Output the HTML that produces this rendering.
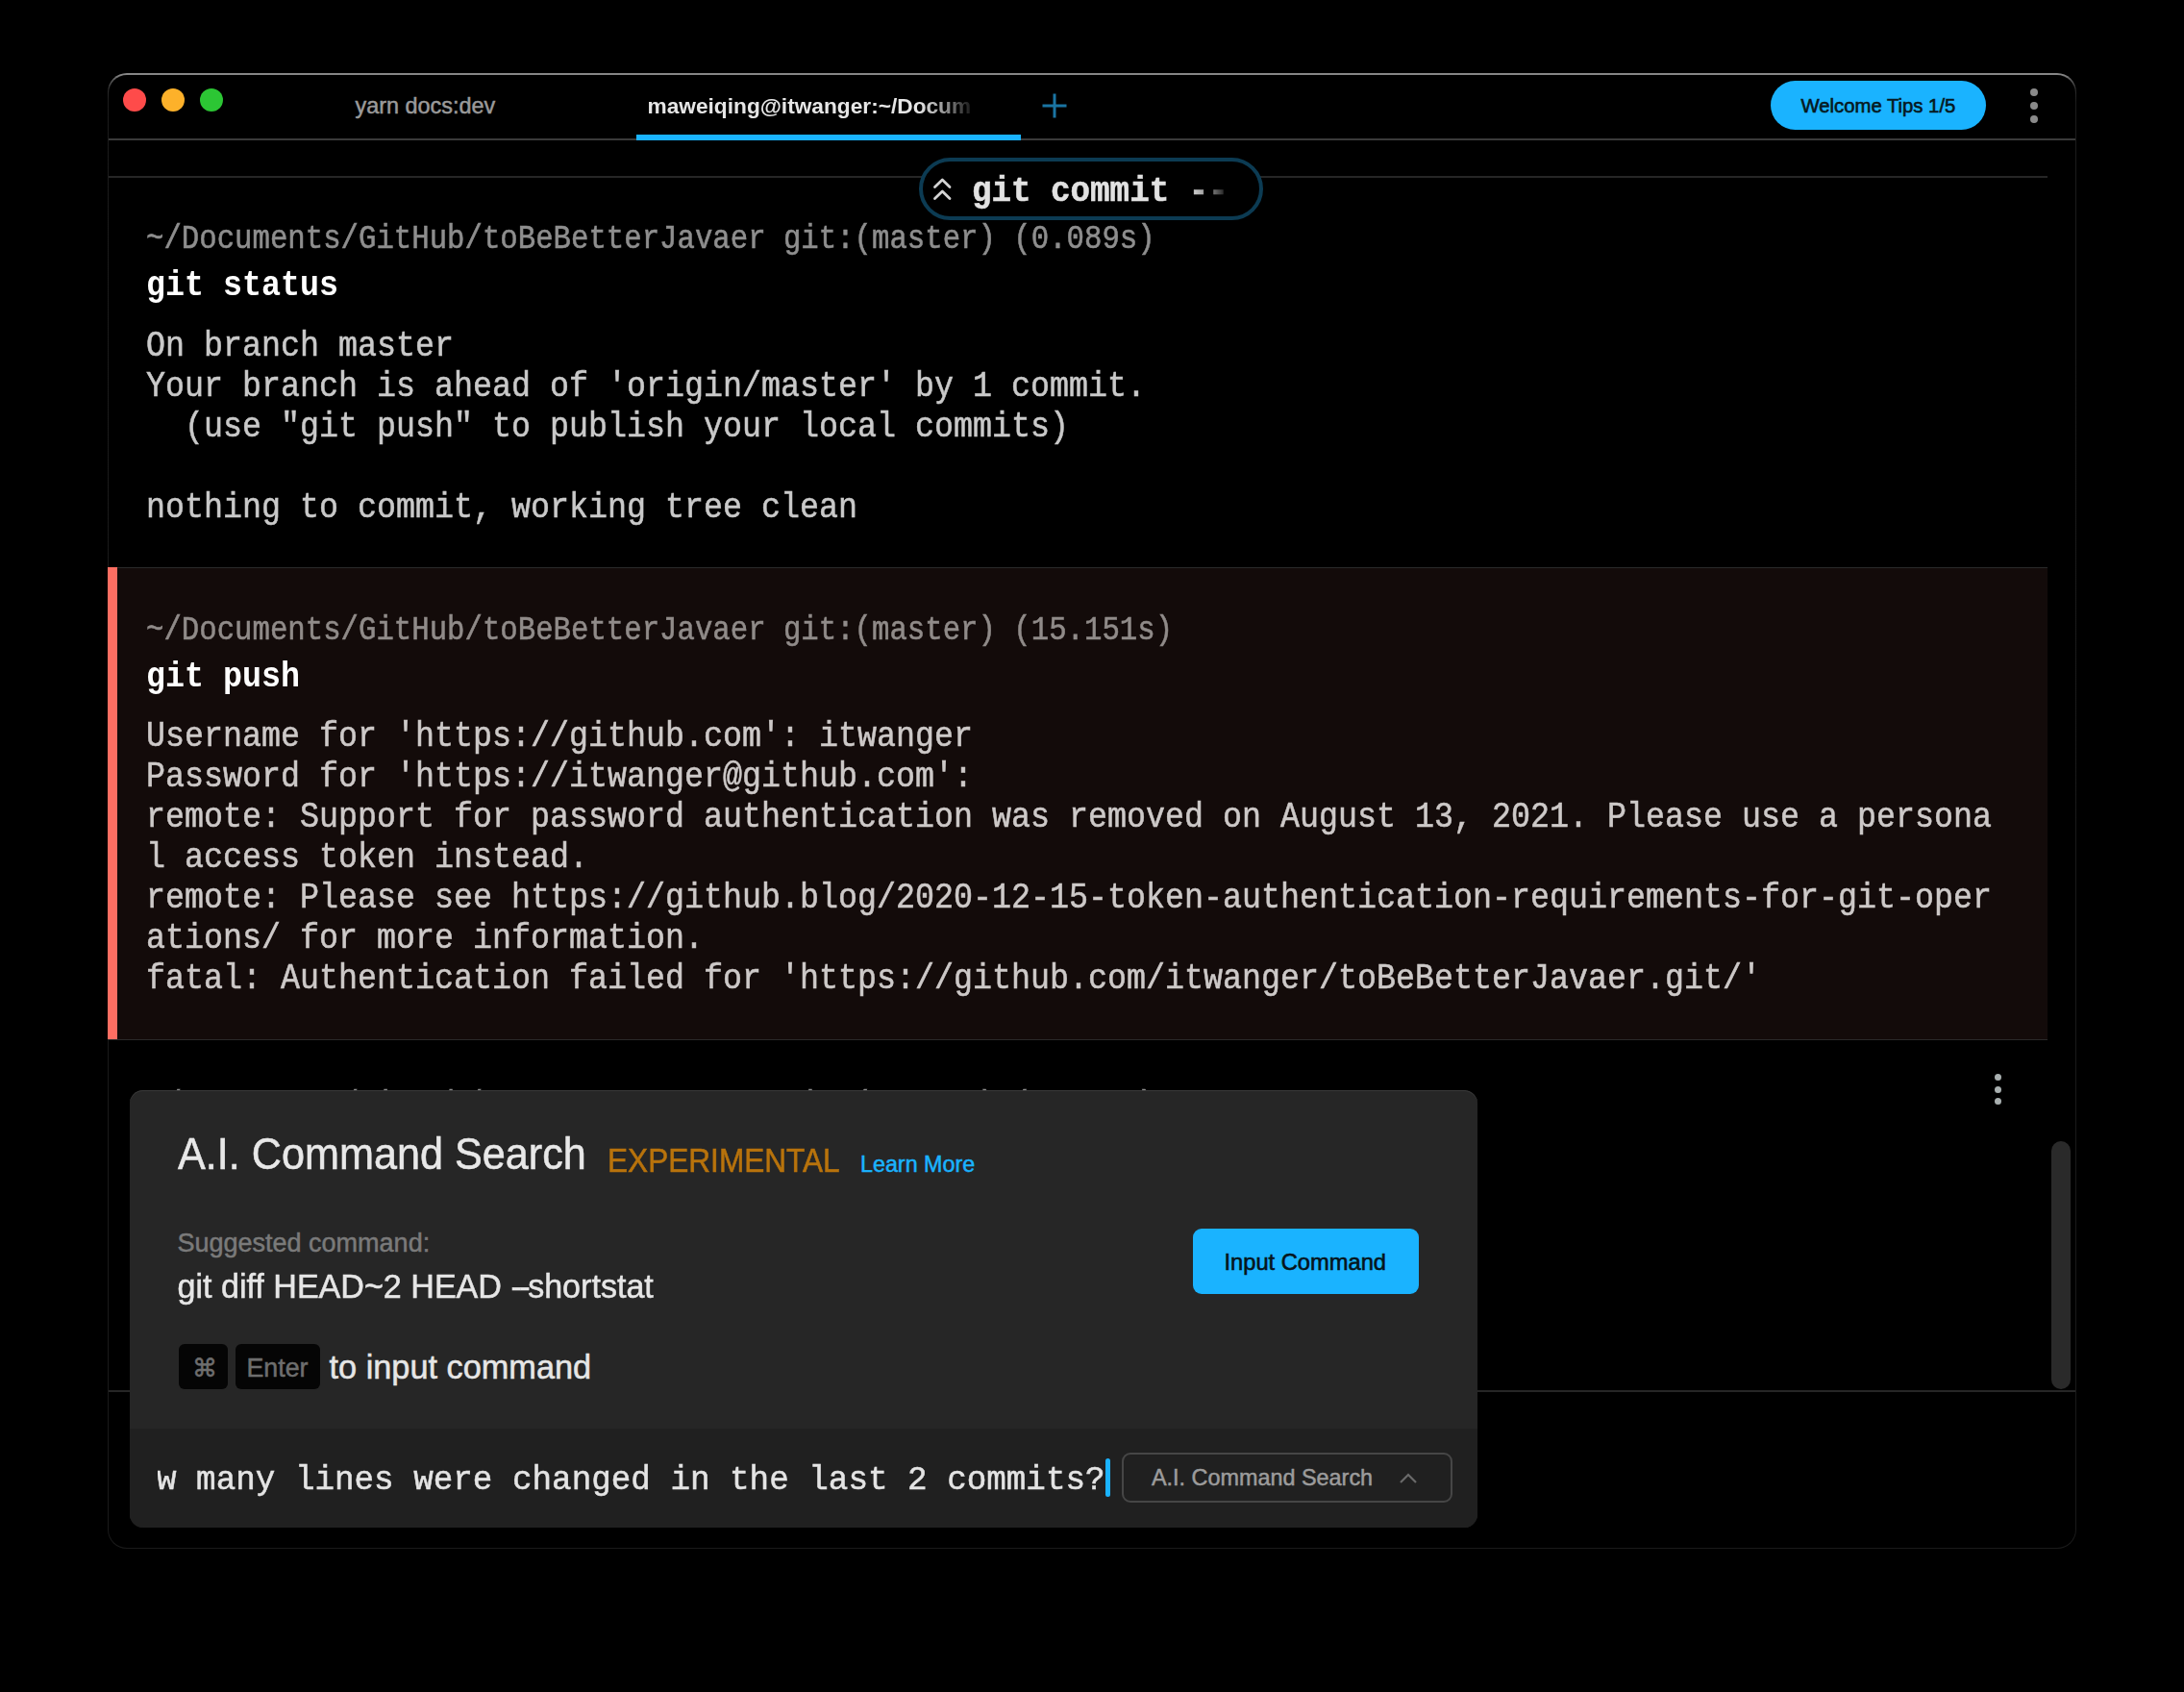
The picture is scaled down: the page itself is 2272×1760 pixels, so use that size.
<!DOCTYPE html>
<html><head><meta charset="utf-8"><style>
html,body{margin:0;padding:0;background:#000;width:2272px;height:1760px;overflow:hidden}
.r{position:absolute}
.t{position:absolute;white-space:pre}
</style></head><body>
<div class="r" style="left:112px;top:76px;width:2048px;height:1535px;border-radius:20px;background:linear-gradient(180deg,#868686 0,#868686 2px,#5a5a5a 7px,#2e2e2e 16px,#1c1c1c 30px,#1a1a1a 100%)"><div style="position:absolute;left:1px;top:1.5px;right:1px;bottom:1px;border-radius:19px;background:#000"></div></div>
<div class="r" style="left:128px;top:92px;width:24px;height:24px;border-radius:50%;background:#fe4b4a"></div>
<div class="r" style="left:168px;top:92px;width:24px;height:24px;border-radius:50%;background:#fdb12a"></div>
<div class="r" style="left:208px;top:92px;width:24px;height:24px;border-radius:50%;background:#2cc634"></div>
<div class="r" style="left:113px;top:144px;width:2046px;height:2px;background:#3a3a3a"></div>
<div class="t" style="left:369.50px;top:95.00px;font-family:'Liberation Sans', sans-serif;font-size:23.4px;font-weight:400;color:#9a9a9a;line-height:30px;-webkit-text-stroke:0.5px #9a9a9a;">yarn docs:dev</div>
<div class="t" style="left:673.50px;top:95.00px;font-family:'Liberation Sans', sans-serif;font-size:22.7px;font-weight:700;color:#e6e6e6;line-height:30px;width:340px;overflow:hidden;-webkit-mask-image:linear-gradient(90deg,#000 0,#000 282px,rgba(0,0,0,0.6) 312px,rgba(0,0,0,0.25) 328px,rgba(0,0,0,0.05) 340px);">maweiqing@itwanger:~/Docum</div>
<div class="r" style="left:662px;top:140px;width:400px;height:6px;background:#1ab3ff"></div>
<svg class="r" style="left:1083px;top:96px" width="28" height="28" viewBox="0 0 28 28"><path d="M14 1.5V26.5M1.5 14H26.5" stroke="#1a75a3" stroke-width="3"/></svg>
<div class="r" style="left:1842px;top:84px;width:224px;height:51px;border-radius:26px;background:#1ab3ff"></div>
<div class="t" style="left:1873.50px;top:96.90px;font-family:'Liberation Sans', sans-serif;font-size:20.3px;font-weight:400;color:#061820;line-height:26px;-webkit-text-stroke:0.5px #061820;-webkit-text-stroke:0.6px #061820;">Welcome Tips 1/5</div>
<div class="r" style="left:2112px;top:92px;width:8px;height:8px;border-radius:50%;background:#8a8a8a"></div>
<div class="r" style="left:2112px;top:106px;width:8px;height:8px;border-radius:50%;background:#8a8a8a"></div>
<div class="r" style="left:2112px;top:120px;width:8px;height:8px;border-radius:50%;background:#8a8a8a"></div>
<div class="r" style="left:113px;top:183px;width:2017px;height:2px;background:#262626"></div>
<div class="t" style="left:152.00px;top:229.80px;font-family:'Liberation Mono', monospace;font-size:30.7px;font-weight:400;color:#8e8e8e;line-height:39px;-webkit-text-stroke:0.5px #8e8e8e;transform:scaleY(1.12);transform-origin:0 28px;">~/Documents/GitHub/toBeBetterJavaer git:(master) (0.089s)</div>
<div class="t" style="left:152.00px;top:277.00px;font-family:'Liberation Mono', monospace;font-size:33.333px;font-weight:700;color:#ffffff;line-height:42px;transform:scaleY(1.12);transform-origin:0 30px;">git status</div>
<div class="t" style="left:152.00px;top:339.60px;font-family:'Liberation Mono', monospace;font-size:33.333px;font-weight:400;color:#c9c9c9;line-height:42px;-webkit-text-stroke:0.5px #c9c9c9;transform:scaleY(1.12);transform-origin:0 30px;">On branch master</div>
<div class="t" style="left:152.00px;top:381.60px;font-family:'Liberation Mono', monospace;font-size:33.333px;font-weight:400;color:#c9c9c9;line-height:42px;-webkit-text-stroke:0.5px #c9c9c9;transform:scaleY(1.12);transform-origin:0 30px;">Your branch is ahead of &#x27;origin/master&#x27; by 1 commit.</div>
<div class="t" style="left:152.00px;top:423.60px;font-family:'Liberation Mono', monospace;font-size:33.333px;font-weight:400;color:#c9c9c9;line-height:42px;-webkit-text-stroke:0.5px #c9c9c9;transform:scaleY(1.12);transform-origin:0 30px;">  (use &quot;git push&quot; to publish your local commits)</div>
<div class="t" style="left:152.00px;top:507.60px;font-family:'Liberation Mono', monospace;font-size:33.333px;font-weight:400;color:#c9c9c9;line-height:42px;-webkit-text-stroke:0.5px #c9c9c9;transform:scaleY(1.12);transform-origin:0 30px;">nothing to commit, working tree clean</div>
<div class="r" style="left:112px;top:590px;width:2018px;height:492px;background:#130b0a;border-top:1px solid #2a2a2a;border-bottom:1px solid #2a2a2a;box-sizing:border-box"></div>
<div class="r" style="left:112px;top:590px;width:10px;height:491px;background:#fe6e62"></div>
<div class="t" style="left:152.00px;top:636.50px;font-family:'Liberation Mono', monospace;font-size:30.7px;font-weight:400;color:#908b89;line-height:39px;-webkit-text-stroke:0.5px #908b89;transform:scaleY(1.12);transform-origin:0 28px;">~/Documents/GitHub/toBeBetterJavaer git:(master) (15.151s)</div>
<div class="t" style="left:152.00px;top:683.70px;font-family:'Liberation Mono', monospace;font-size:33.333px;font-weight:700;color:#ffffff;line-height:42px;transform:scaleY(1.12);transform-origin:0 30px;">git push</div>
<div class="t" style="left:152.00px;top:745.90px;font-family:'Liberation Mono', monospace;font-size:33.333px;font-weight:400;color:#cdc9c8;line-height:42px;-webkit-text-stroke:0.5px #cdc9c8;transform:scaleY(1.12);transform-origin:0 30px;">Username for &#x27;https://github.com&#x27;: itwanger</div>
<div class="t" style="left:152.00px;top:787.90px;font-family:'Liberation Mono', monospace;font-size:33.333px;font-weight:400;color:#cdc9c8;line-height:42px;-webkit-text-stroke:0.5px #cdc9c8;transform:scaleY(1.12);transform-origin:0 30px;">Password for &#x27;https://itwanger@github.com&#x27;:</div>
<div class="t" style="left:152.00px;top:829.90px;font-family:'Liberation Mono', monospace;font-size:33.333px;font-weight:400;color:#cdc9c8;line-height:42px;-webkit-text-stroke:0.5px #cdc9c8;transform:scaleY(1.12);transform-origin:0 30px;">remote: Support for password authentication was removed on August 13, 2021. Please use a persona</div>
<div class="t" style="left:152.00px;top:871.90px;font-family:'Liberation Mono', monospace;font-size:33.333px;font-weight:400;color:#cdc9c8;line-height:42px;-webkit-text-stroke:0.5px #cdc9c8;transform:scaleY(1.12);transform-origin:0 30px;">l access token instead.</div>
<div class="t" style="left:152.00px;top:913.90px;font-family:'Liberation Mono', monospace;font-size:33.333px;font-weight:400;color:#cdc9c8;line-height:42px;-webkit-text-stroke:0.5px #cdc9c8;transform:scaleY(1.12);transform-origin:0 30px;">remote: Please see https://github.blog/2020-12-15-token-authentication-requirements-for-git-oper</div>
<div class="t" style="left:152.00px;top:955.90px;font-family:'Liberation Mono', monospace;font-size:33.333px;font-weight:400;color:#cdc9c8;line-height:42px;-webkit-text-stroke:0.5px #cdc9c8;transform:scaleY(1.12);transform-origin:0 30px;">ations/ for more information.</div>
<div class="t" style="left:152.00px;top:997.90px;font-family:'Liberation Mono', monospace;font-size:33.333px;font-weight:400;color:#cdc9c8;line-height:42px;-webkit-text-stroke:0.5px #cdc9c8;transform:scaleY(1.12);transform-origin:0 30px;">fatal: Authentication failed for &#x27;https://github.com/itwanger/toBeBetterJavaer.git/&#x27;</div>
<div class="t" style="left:152.00px;top:1130.50px;font-family:'Liberation Mono', monospace;font-size:30.7px;font-weight:400;color:#8e8e8e;line-height:39px;-webkit-text-stroke:0.5px #8e8e8e;transform:scaleY(1.12);transform-origin:0 28px;">~/Documents/GitHub/toBeBetterJavaer git:(master) (0.031s)</div>
<div class="r" style="left:2074.5px;top:1117.0px;width:7px;height:7px;border-radius:50%;background:#a9b0b0"></div>
<div class="r" style="left:2074.5px;top:1129.5px;width:7px;height:7px;border-radius:50%;background:#a9b0b0"></div>
<div class="r" style="left:2074.5px;top:1141.8px;width:7px;height:7px;border-radius:50%;background:#a9b0b0"></div>
<div class="r" style="left:2134px;top:1187px;width:20px;height:258px;border-radius:10px;background:#2a2a2a"></div>
<div class="r" style="left:113px;top:1446px;width:2046px;height:2px;background:#262626"></div>
<div class="r" style="left:956px;top:164px;width:358px;height:65px;box-sizing:border-box;border:4px solid #0c3b53;border-radius:33px;background:#000"></div>
<svg class="r" style="left:966px;top:182px" width="28" height="30" viewBox="0 0 28 30"><path d="M6.5 12.5L14.3 5L22 12.5M6.5 24.5L14.3 17L22 24.5" fill="none" stroke="#d4d4d4" stroke-width="2.8" stroke-linecap="round" stroke-linejoin="round"/></svg>
<div class="t" style="left:1011.00px;top:179.00px;font-family:'Liberation Mono', monospace;font-size:34.2px;font-weight:700;color:#e2e2e2;line-height:42px;-webkit-text-stroke:0.5px #e2e2e2;transform:scaleY(1.08);transform-origin:0 30px;-webkit-mask-image:linear-gradient(90deg,#000 0,#000 226px,rgba(0,0,0,0.55) 250px,transparent 268px);">git commit --</div>
<div class="r" style="left:135px;top:1134px;width:1402px;height:455px;border-radius:14px;background:#262626;box-shadow:inset 0 1px 0 #3a3a3a;overflow:hidden"><div style="position:absolute;left:0;top:352px;width:100%;height:103px;background:#202020"></div></div>
<div class="t" style="left:185.00px;top:1174.80px;font-family:'Liberation Sans', sans-serif;font-size:43.2px;font-weight:400;color:#e8e8e8;line-height:52px;-webkit-text-stroke:0.5px #e8e8e8;transform:scaleY(1.06);transform-origin:0 41px;">A.I. Command Search</div>
<div class="t" style="left:632.00px;top:1188.00px;font-family:'Liberation Sans', sans-serif;font-size:31.6px;font-weight:400;color:#b8730c;line-height:40px;-webkit-text-stroke:0.5px #b8730c;transform:scaleY(1.1);transform-origin:0 31px;">EXPERIMENTAL</div>
<div class="t" style="left:895.00px;top:1196.00px;font-family:'Liberation Sans', sans-serif;font-size:23.3px;font-weight:400;color:#1ab3ff;line-height:30px;-webkit-text-stroke:0.5px #1ab3ff;">Learn More</div>
<div class="t" style="left:184.50px;top:1275.80px;font-family:'Liberation Sans', sans-serif;font-size:27px;font-weight:400;color:#7a7a7a;line-height:34px;-webkit-text-stroke:0.5px #7a7a7a;">Suggested command:</div>
<div class="t" style="left:184.50px;top:1317.00px;font-family:'Liberation Sans', sans-serif;font-size:34.1px;font-weight:400;color:#e6e6e6;line-height:42px;-webkit-text-stroke:0.5px #e6e6e6;transform:scaleY(1.05);transform-origin:0 33px;">git diff HEAD~2 HEAD <span style="letter-spacing:-2.5px">--</span>shortstat</div>
<div class="r" style="left:186px;top:1398px;width:51px;height:47px;border-radius:6px;background:#050505"></div>
<div class="t" style="left:200.00px;top:1405.70px;font-family:'Liberation Sans', sans-serif;font-size:26px;font-weight:400;color:#6e6e6e;line-height:34px;-webkit-text-stroke:0.5px #6e6e6e;">⌘</div>
<div class="r" style="left:244.5px;top:1398px;width:88.0px;height:47px;border-radius:6px;background:#050505"></div>
<div class="t" style="left:256.50px;top:1405.70px;font-family:'Liberation Sans', sans-serif;font-size:26.8px;font-weight:400;color:#6e6e6e;line-height:34px;-webkit-text-stroke:0.5px #6e6e6e;">Enter</div>
<div class="t" style="left:342.50px;top:1400.60px;font-family:'Liberation Sans', sans-serif;font-size:34.3px;font-weight:400;color:#e6e6e6;line-height:42px;-webkit-text-stroke:0.5px #e6e6e6;">to input command</div>
<div class="r" style="left:1241px;top:1278px;width:235px;height:68px;border-radius:9px;background:#1ab3ff"></div>
<div class="t" style="left:1273.50px;top:1297.70px;font-family:'Liberation Sans', sans-serif;font-size:23.7px;font-weight:400;color:#06141b;line-height:30px;-webkit-text-stroke:0.5px #06141b;-webkit-text-stroke:0.6px #06141b;">Input Command</div>
<div class="r" style="left:164px;top:1500px;width:1000px;height:70px;overflow:hidden">
<div class="t" style="left:-42.10px;top:17.70px;font-family:'Liberation Mono', monospace;font-size:34.25px;font-weight:400;color:#e4e4e4;line-height:43px;-webkit-text-stroke:0.5px #e4e4e4;transform:scaleY(1.05);transform-origin:0 31px;">How many lines were changed in the last 2 commits?</div>
</div>
<div class="r" style="left:1150px;top:1517px;width:5px;height:40px;border-radius:3px;background:#1ab3ff"></div>
<div class="r" style="left:1167px;top:1511px;width:344px;height:52px;box-sizing:border-box;border:2px solid #464646;border-radius:9px"></div>
<div class="t" style="left:1198.00px;top:1521.80px;font-family:'Liberation Sans', sans-serif;font-size:23.4px;font-weight:400;color:#9c9c9c;line-height:30px;-webkit-text-stroke:0.5px #9c9c9c;">A.I. Command Search</div>
<svg class="r" style="left:1454px;top:1529px" width="22" height="16" viewBox="0 0 22 16"><path d="M3 13L11 5L19 13" fill="none" stroke="#6a6a6a" stroke-width="2.2"/></svg>
</body></html>
